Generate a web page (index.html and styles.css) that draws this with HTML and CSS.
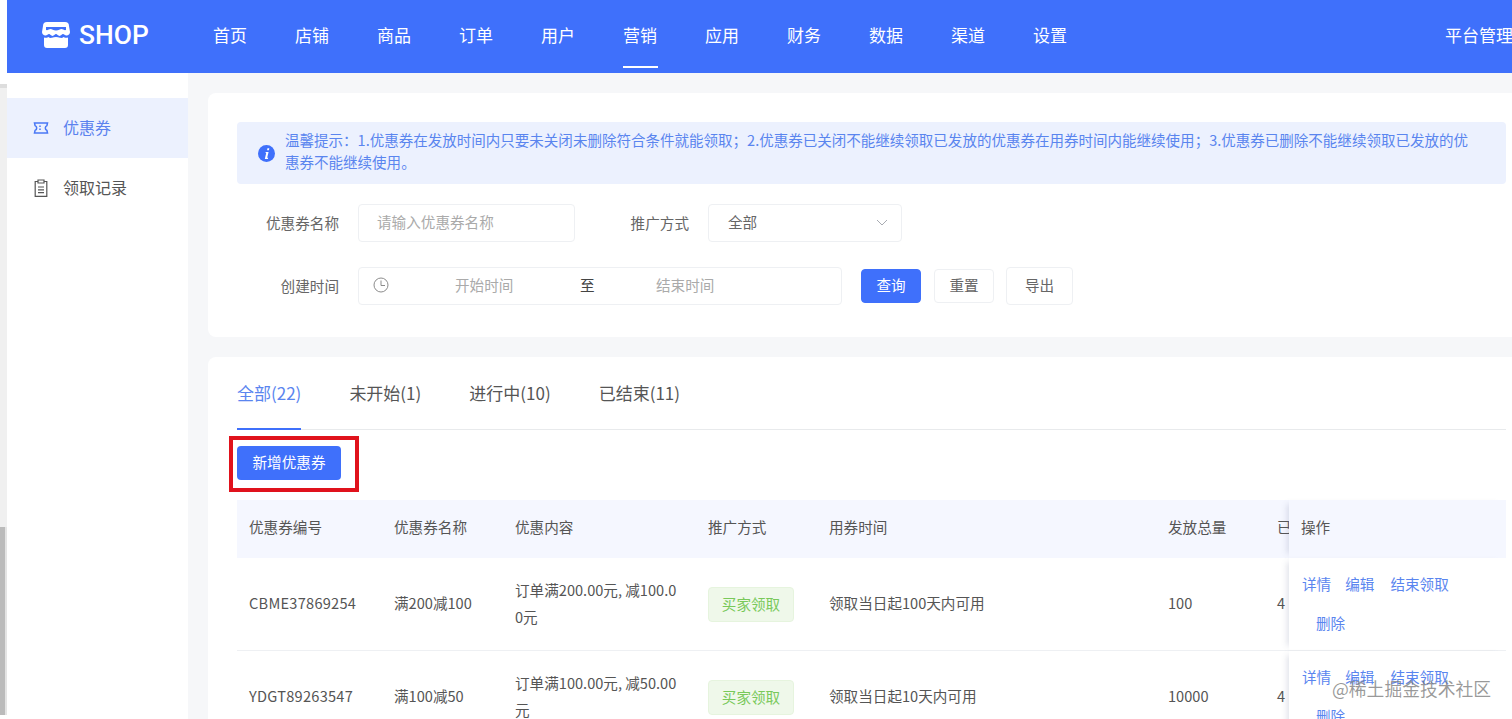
FILE: index.html
```html
<!DOCTYPE html>
<html lang="zh">
<head>
<meta charset="utf-8">
<title>优惠券</title>
<link rel="stylesheet" href="styles.css">
</head>
<body>
<div class="strip"><div class="strip-a"></div><div class="strip-b"></div><div class="strip-c"></div></div>
<div class="app">
  <header class="topbar">
    <div class="logo">
      <svg class="logo-icon" viewBox="0 0 28 26" width="28" height="26"><path fill="#fff" d="M5 0h18a4 4 0 0 1 4 4l1 6a3.600 3.600 0 0 1-3 3.400c-2 .3-2.800-1.400-4-1.400s-2 1.900-3.500 1.900-2.300-1.900-3.500-1.900-2 1.900-3.500 1.900-2.300-1.900-3.500-1.900-2 1.700-4 1.400A3.600 3.600 0 0 1 0 10l1-6a4 4 0 0 1 4-4z"/><path fill="#3f70fb" d="M4 5h20v3c-1.800.6-3-.9-4.500-.9s-2.800 1.400-5.500 1.400-4-1.400-5.500-1.400S5.800 8.600 4 8z"/><path fill="#fff" d="M2 15.500c1.600.6 3 .3 4.300-.6 1 .9 2.300 1.300 3.700.9 1.300-.3 2.700-.9 4-.9s2.700.6 4 .9c1.400.4 2.700 0 3.700-.9 1.300.9 2.700 1.200 4.300.6V23a3 3 0 0 1-3 3H5a3 3 0 0 1-3-3z"/></svg>
      <span class="logo-text">SHOP</span>
    </div>
    <nav class="nav">
      <a class="nav-item">首页</a><a class="nav-item">店铺</a><a class="nav-item">商品</a><a class="nav-item">订单</a><a class="nav-item">用户</a><a class="nav-item active">营销</a><a class="nav-item">应用</a><a class="nav-item">财务</a><a class="nav-item">数据</a><a class="nav-item">渠道</a><a class="nav-item">设置</a>
    </nav>
    <div class="platform">平台管理</div>
  </header>
  <div class="body">
    <aside class="side">
      <div class="side-item current">
        <svg viewBox="0 0 16 14" width="16" height="14"><path fill="none" stroke="#4a78f5" stroke-width="1.500" d="M1.500 2h13l-.6 2.600a2.600 2.600 0 0 0 0 4.800l.6 2.600h-13l.6-2.600a2.600 2.600 0 0 0 0-4.800z"/><path stroke="#4a78f5" stroke-width="1.500" stroke-dasharray="1.500 1.500" d="M7 4.500v6"/></svg>
        <span>优惠券</span>
      </div>
      <div class="side-item">
        <svg viewBox="0 0 14 18" width="14" height="18"><path fill="none" stroke="#555" stroke-width="1.200" d="M4 2.500H1.200v14.800h11.600V2.500H10"/><path fill="none" stroke="#555" stroke-width="1.200" d="M4 1h6v3H4zM4 8h6M4 10.800h6M4 13.600h6"/></svg>
        <span>领取记录</span>
      </div>
    </aside>
    <main class="main">
      <section class="card filter">
        <div class="tip">
          <svg class="tip-icon" viewBox="0 0 18 18" width="17" height="17"><circle cx="9" cy="9" r="9" fill="#3f70fb"/><path fill="#fff" d="M10 3.500h2l-.4 2h-2zM8.200 7.300h3l-1.500 6.200h1.100l-.3 1.200H7.200l1.500-6.200h-.8z"/></svg>
          <p class="tip-text">温馨提示：1.优惠券在发放时间内只要未关闭未删除符合条件就能领取；2.优惠券已关闭不能继续领取已发放的优惠券在用券时间内能继续使用；3.优惠券已删除不能继续领取已发放的优惠券不能继续使用。</p>
        </div>
        <div class="form-row first">
          <label class="label">优惠券名称</label>
          <div class="box name-box placeholder">请输入优惠券名称</div>
          <label class="label label-two">推广方式</label>
          <div class="box select-box"><span>全部</span>
            <svg viewBox="0 0 12 7" width="12" height="7"><path fill="none" stroke="#a8abb2" d="M1 1l5 5 5-5"/></svg>
          </div>
        </div>
        <div class="form-row">
          <label class="label">创建时间</label>
          <div class="box range-box">
            <svg viewBox="0 0 16 16" width="16" height="16"><circle cx="8" cy="8" r="7" fill="none" stroke="#8c8c8c"/><path fill="none" stroke="#8c8c8c" d="M8 3.500V8.500H12"/></svg>
            <span class="range-start">开始时间</span>
            <span class="range-to">至</span>
            <span class="range-end">结束时间</span>
          </div>
          <button class="btn primary">查询</button>
          <button class="btn reset">重置</button>
          <button class="btn export">导出</button>
        </div>
      </section>
      <section class="card list">
        <div class="tabs">
          <div class="tab active">全部(22)</div>
          <div class="tab">未开始(1)</div>
          <div class="tab">进行中(10)</div>
          <div class="tab">已结束(11)</div>
        </div>
        <div class="add-wrap"><button class="btn-add">新增优惠券</button></div>
        <div class="table">
          <div class="tr head">
            <div class="td c1">优惠券编号</div><div class="td c2">优惠券名称</div><div class="td c3">优惠内容</div><div class="td c4">推广方式</div><div class="td c5">用券时间</div><div class="td c6">发放总量</div><div class="td c7">已领取</div><div class="td c8">操作</div>
          </div>
          <div class="tr">
            <div class="td c1 code">CBME37869254</div><div class="td c2">满200减100</div><div class="td c3">订单满200.00元, 减100.00元</div><div class="td c4"><span class="tag">买家领取</span></div><div class="td c5">领取当日起100天内可用</div><div class="td c6">100</div><div class="td c7">4</div>
            <div class="td c8 ops"><a>详情</a><a>编辑</a><a>结束领取</a><a class="del">删除</a></div>
          </div>
          <div class="tr">
            <div class="td c1 code">YDGT89263547</div><div class="td c2">满100减50</div><div class="td c3">订单满100.00元, 减50.00元</div><div class="td c4"><span class="tag">买家领取</span></div><div class="td c5">领取当日起10天内可用</div><div class="td c6">10000</div><div class="td c7">4</div>
            <div class="td c8 ops"><a>详情</a><a>编辑</a><a>结束领取</a><a class="del">删除</a></div>
          </div>
        </div>
      </section>
    </main>
  </div>
</div>
<div class="watermark">@稀土掘金技术社区</div>
</body>
</html>
```
FILE: styles.css
```css
*, *::before, *::after { box-sizing: border-box; }
html, body { margin: 0; height: 100%; overflow: hidden; }
body {
  display: flex;
  width: 1512px;
  height: 719px;
  background: #fff;
  font-family: "Noto Sans CJK SC", "Liberation Sans", sans-serif;
  font-size: 14.6px;
  color: #555;
}
.strip { width: 7px; flex: none; display: flex; flex-direction: column; }
.strip-a { height: 84px; background: #fff; }
.strip-b { height: 443px; background: #f0f0f0; border-top: 4px solid #ddd; }
.strip-c { height: 188px; background: #bbb; border-right: 2px solid #e4e4e4; }
.app { flex: none; width: 1520px; height: 719px; display: flex; flex-direction: column; }
.topbar { height: 73px; flex: none; background: #3f70fb; color: #fff; display: flex; align-items: center; }
.logo { width: 206px; padding: 0 0 4px 35px; flex: none; display: flex; align-items: center; gap: 9px; }
.logo-text { font-family: Roboto, "Liberation Sans", sans-serif; font-size: 26.400px; font-weight: 500; }
.nav { display: flex; }
.nav-item { width: 82px; height: 73px; line-height: 69px; font-size: 17px; position: relative; white-space: nowrap; }
.nav-item.active::after { content: ""; position: absolute; left: 0; top: 66px; width: 35px; height: 2px; background: #fff; }
.platform { margin-left: 330px; font-size: 17px; white-space: nowrap; margin-bottom: 4px; }
.body { flex: 1; display: flex; min-height: 0; }
.side { width: 181px; flex: none; background: #fff; padding-top: 25px; }
.side-item { height: 60px; display: flex; align-items: center; padding-left: 26px; gap: 14px; font-size: 16px; color: #555; }
.side-item span { margin-bottom: 2px; }
.side-item svg { width: 16px; flex: none; }
.side-item.current { background: #ecf1fe; color: #5b82ee; }
.main { flex: 1; background: #f6f7f9; padding: 20px 0 0 20px; min-width: 0; display: flex; flex-direction: column; gap: 20px; }
.card { background: #fff; border-radius: 8px; padding: 0 14px 0 29px; }
.filter { height: 244px; padding-top: 29px; flex: none; }
.tip { height: 62px; width: 1269px; background: #ecf1fe; border-radius: 4px; display: flex; align-items: center; padding-left: 21px; gap: 10px; }
.tip-icon { flex: none; }
.tip-text { margin: 0 0 4px; width: 1190px; font-size: 14.530px; line-height: 22px; color: #5a85ef; }
.form-row { display: flex; align-items: center; height: 38px; margin-top: 25px; }
.form-row.first { margin-top: 20px; }
.label { width: 102px; margin: 0 19px 2px 0; text-align: right; color: #666; }
.label-two { width: 80px; margin-left: 34px; margin-right: 19px; }
.box { height: 38px; border: 1px solid #eef0f3; border-radius: 4px; display: flex; align-items: center; background: #fff; padding-bottom: 3px; }
.box svg { margin-top: 1px; }
.name-box { width: 217px; padding-left: 18px; color: #aaa; }
.select-box { width: 194px; padding: 0 13px 3px 19px; justify-content: space-between; color: #666; }
.range-box { width: 484px; padding-left: 14px; color: #aaa; }
.range-start { margin-left: 66px; width: 125px; }
.range-to { color: #444; width: 76px; }
.btn { height: 34px; width: 60px; border: 1px solid #eef0f3; border-radius: 4px; background: #fff; color: #666; font: inherit; padding: 0 0 3px; margin-left: 13px; }
.btn.primary { background: #3f70fb; border-color: #3f70fb; color: #fff; margin-left: 19px; }
.btn.export { width: 67px; height: 38px; margin-left: 12px; }
.list { flex: 1; border-radius: 8px 8px 0 0; padding-top: 16px; min-height: 0; overflow: hidden; }
.tabs { display: flex; gap: 48px; height: 57px; border-bottom: 1px solid #e8eaec; width: 1269px; }
.tab { font-size: 17px; color: #555; line-height: 39px; height: 57px; white-space: nowrap; }
.tab.active { color: #5a85ef; border-bottom: 2px solid #3f70fb; }
.add-wrap { position: relative; padding-top: 16px; height: 70px; }
.add-wrap::before { content: ""; position: absolute; left: -8px; top: 6px; width: 130px; height: 56px; border: 4px solid #e0121c; }
.btn-add { position: relative; width: 104px; height: 34px; border: 0; border-radius: 4px; background: #3f70fb; color: #fff; font: inherit; padding: 0 0 3px; display: block; }
.table { width: 1269px; }
.tr { display: flex; height: 93px; border-bottom: 1px solid #eef0f3; align-items: stretch; }
.tr.head { height: 58px; background: #f5f7ff; border-bottom: 0; }
.td { display: flex; align-items: center; padding: 0 12px 3px; color: #555; line-height: 27px; overflow: hidden; flex: none; }
.tr.head .td { padding-bottom: 6px; }
.code { letter-spacing: .25px; }
.c1 { width: 145px; }
.c2 { width: 121px; }
.c3 { width: 193px; word-break: break-all; }
.c4 { width: 121px; padding-bottom: 0; }
.c5 { width: 339px; }
.c6 { width: 109px; }
.c7 { width: 24px; padding-right: 0; white-space: nowrap; }
.c8 { width: 217px; box-shadow: -6px 0 6px -4px rgba(90, 100, 140, .18); position: relative; }
.tr.head .c8 { background: #f5f7ff; }
.ops { display: block; background: #fff; padding: 6px 12px 0 13px; line-height: 39px; }
.ops a { color: #5a85ef; margin-right: 16px; white-space: nowrap; display: inline-block; }
.ops a:first-child { margin-right: 14px; }
.ops a.del { margin-left: 14px; margin-right: 0; display: block; }
.tag { display: inline-block; width: 86px; height: 35px; line-height: 31px; text-align: center; background: #eff8ea; border: 1px solid #e6f4de; border-radius: 4px; color: #79c95a; }
.watermark { position: absolute; left: 1332px; top: 676px; font-size: 17.800px; line-height: 24px; color: rgba(120, 120, 120, .75); white-space: nowrap; }
```
